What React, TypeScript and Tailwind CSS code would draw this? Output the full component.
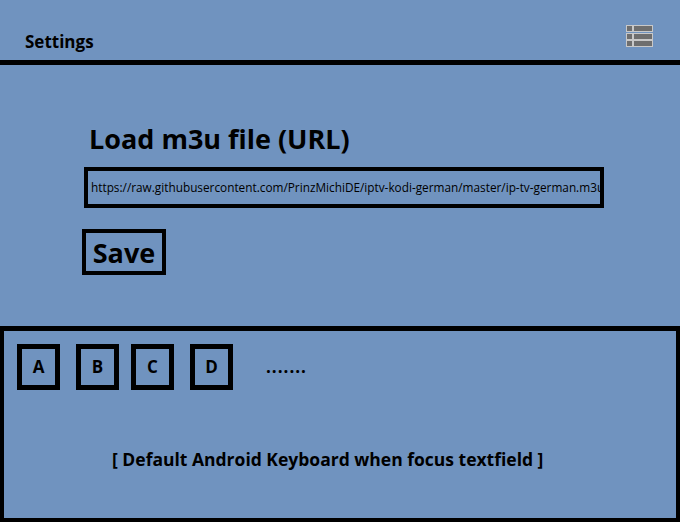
import React from 'react';

const url = 'https://raw.githubusercontent.com/PrinzMichiDE/iptv-kodi-german/master/ip-tv-german.m3u';

function MenuIcon() {
  // three rows: small left cell + wide right cell, grey fill with light outline
  return (
    <svg width="27" height="22" viewBox="0 0 27 22">
      {[0, 8, 15].map((y) => (
        <g key={y} fill="#6e6e6e" stroke="#c8c8c8" strokeWidth="1">
          <rect x="0.5" y={y + 0.5} width="6" height="6" />
          <rect x="7.5" y={y + 0.5} width="19" height="6" />
        </g>
      ))}
    </svg>
  );
}

function Key({ label, className }: { label: string; className?: string }) {
  return (
    <div
      className={`w-[43px] h-[46px] border-[5px] border-black flex items-center justify-center text-[17px] font-bold ${className ?? ''}`}
    >
      {label}
    </div>
  );
}

export default function App() {
  return (
    <div
      className="w-[680px] h-[522px] bg-[#7093bf] text-black flex flex-col overflow-hidden"
      style={{ fontFamily: '"Open Sans", Lato, sans-serif' }}
    >
      {/* Header */}
      <div className="h-[60px] flex justify-between">
        <span className="pl-[25px] pt-[33px] text-[17px] font-bold leading-none">Settings</span>
        <div className="pt-[25px] pr-[27px]">
          <MenuIcon />
        </div>
      </div>
      <div className="h-[5px] bg-black" />

      {/* Settings form */}
      <div className="flex-1 pl-[84px]">
        <h1 className="mt-[60px] ml-[5px] text-[27px] font-bold leading-none">Load m3u file (URL)</h1>
        <div className="mt-[15px] w-[520px] h-[41px] border-4 border-black flex items-center px-[3px] overflow-hidden">
          <span className="text-[11.8px] whitespace-nowrap">{url}</span>
        </div>
        <button className="mt-[21px] -ml-[2px] w-[84px] h-[46px] border-4 border-black flex items-center justify-center text-[27px] font-bold leading-none">
          Save
        </button>
      </div>

      {/* Keyboard placeholder */}
      <div className="h-[196px] border-[4px] border-t-[5px] border-black pl-[13px] pt-[13px]">
        <div className="flex items-center">
          <Key label="A" />
          <Key label="B" className="ml-[16px]" />
          <Key label="C" className="ml-[12px]" />
          <Key label="D" className="ml-[16px]" />
          <span className="ml-[33px] text-[17px] font-bold tracking-[1px]">.......</span>
        </div>
        <p className="mt-[56px] ml-[95px] text-[17.5px] font-bold">[ Default Android Keyboard when focus textfield ]</p>
      </div>
    </div>
  );
}
